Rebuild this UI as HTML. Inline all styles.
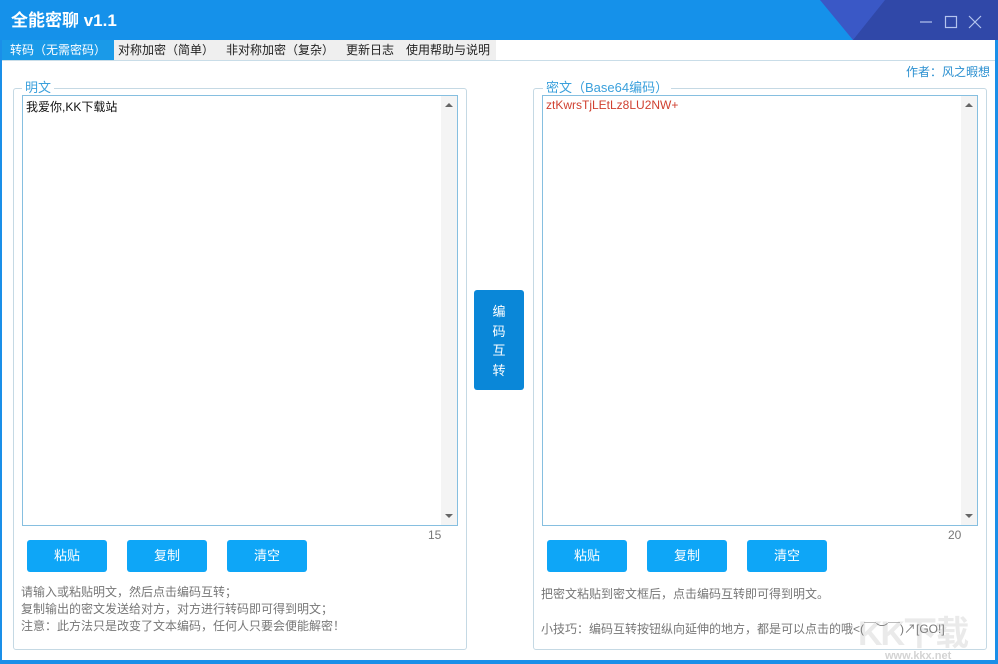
<!DOCTYPE html>
<html><head><meta charset="utf-8"><style>
*{margin:0;padding:0;box-sizing:border-box}
body{width:998px;height:664px;overflow:hidden;background:#1a8fe8;font-family:"Liberation Sans","Microsoft YaHei","Noto Sans CJK SC",sans-serif;font-size:12px;position:relative}
.abs{position:absolute}
#title{left:0;top:0;width:998px;height:40px;background:#1591ea}
#main{left:2px;top:40px;width:993px;height:620px;background:#fff}
#tabs{left:2px;top:40px;width:494px;height:20px;background:#efefef}
.tab{position:absolute;top:40px;height:20px;line-height:20px;color:#222;font-size:12px}
.gb{border:1px solid #c5d9e4;border-radius:3px}
.ta{border:1px solid #86bfe0;background:#fff}
.sb{position:absolute;right:0;top:0;width:16px;height:100%;background:#f4f4f4}
.btn{position:absolute;height:32px;width:80px;background:#0ea6f7;color:#fff;border-radius:3px;text-align:center;line-height:32px;font-size:13px}
.legend{position:absolute;background:#fff;color:#3aa0dc;font-size:13px;padding:0 3px;line-height:14px}
.tip{position:absolute;color:#777;font-size:12px;line-height:17px;white-space:nowrap}
</style></head><body>
<div id="title" class="abs"></div>
<svg class="abs" style="left:0;top:0" width="998" height="40">
<polygon points="820,0 998,0 998,40 853,40" fill="#3a58c6"/>
<polygon points="885,0 998,0 998,40 853,40" fill="#3048a8"/>
<line x1="920" y1="22" x2="932" y2="22" stroke="#b4c4ee" stroke-width="1.2"/>
<rect x="945.5" y="16.5" width="11" height="11" fill="none" stroke="#b4c4ee" stroke-width="1.2"/>
<path d="M969 16 L981 28 M981 16 L969 28" stroke="#b4c4ee" stroke-width="1.2"/>
</svg>
<div class="abs" style="left:11px;top:10px;color:#fff;font-weight:bold;font-size:17px;line-height:22px">全能密聊 v1.1</div>
<div id="main" class="abs"></div>
<div id="tabs" class="abs"></div>
<div class="tab" style="left:2px;width:112px;background:#1a9ae8;color:#fff;padding-left:8px">转码（无需密码）</div>
<div class="tab" style="left:118px">对称加密（简单）</div>
<div class="tab" style="left:226px">非对称加密（复杂）</div>
<div class="tab" style="left:346px">更新日志</div>
<div class="tab" style="left:406px">使用帮助与说明</div>
<div class="abs" style="left:2px;top:60px;width:993px;height:1px;background:#c9dde8"></div>
<div class="abs" style="right:8px;top:64px;color:#2a8fd0;font-size:12px;line-height:16px">作者：风之暇想</div>

<div class="abs gb" style="left:13px;top:88px;width:454px;height:562px"></div>
<div class="legend" style="left:22px;top:81px">明文</div>
<div class="abs ta" style="left:22px;top:95px;width:436px;height:431px"><div class="sb"><svg width="16" height="430"><path d="M4 11 L8 7 L12 11Z" fill="#666"/><path d="M4 418 L8 422 L12 418Z" fill="#666"/></svg></div>
<div style="position:absolute;left:3px;top:2px;color:#111;font-size:12px">我爱你,KK下载站</div></div>
<div class="abs" style="left:428px;top:528px;color:#777;font-size:12px">15</div>
<div class="btn" style="left:27px;top:540px">粘贴</div>
<div class="btn" style="left:127px;top:540px">复制</div>
<div class="btn" style="left:227px;top:540px">清空</div>
<div class="tip" style="left:21px;top:584px">请输入或粘贴明文，然后点击编码互转；<br>复制输出的密文发送给对方，对方进行转码即可得到明文；<br>注意：此方法只是改变了文本编码，任何人只要会便能解密！</div>

<div class="abs" style="left:474px;top:290px;width:50px;height:100px;background:#0a87d8;border-radius:3px;color:#fff;font-size:13px;text-align:center;padding-top:12px;line-height:19.5px">编<br>码<br>互<br>转</div>

<div class="abs gb" style="left:533px;top:88px;width:454px;height:562px"></div>
<div class="legend" style="left:543px;top:81px">密文（Base64编码）</div>
<div class="abs ta" style="left:542px;top:95px;width:436px;height:431px"><div class="sb"><svg width="16" height="430"><path d="M4 11 L8 7 L12 11Z" fill="#666"/><path d="M4 418 L8 422 L12 418Z" fill="#666"/></svg></div>
<div style="position:absolute;left:3px;top:2px;color:#d04030;font-size:12px">ztKwrsTjLEtLz8LU2NW+</div></div>
<div class="abs" style="left:948px;top:528px;color:#777;font-size:12px">20</div>
<div class="btn" style="left:547px;top:540px">粘贴</div>
<div class="btn" style="left:647px;top:540px">复制</div>
<div class="btn" style="left:747px;top:540px">清空</div>
<div class="tip" style="left:541px;top:586px">把密文粘贴到密文框后，点击编码互转即可得到明文。</div>
<div class="tip" style="left:541px;top:621px">小技巧：编码互转按钮纵向延伸的地方，都是可以点击的哦<(￣︶￣)↗[GO!]</div>
<div class="abs" style="left:858px;top:606px;color:rgba(150,150,150,0.2);font-size:34px;font-weight:bold;letter-spacing:-2px">KK下载</div>
<div class="abs" style="left:885px;top:650px;color:rgba(130,130,130,0.35);font-size:11px;font-weight:bold">www.kkx.net</div>
</body></html>
